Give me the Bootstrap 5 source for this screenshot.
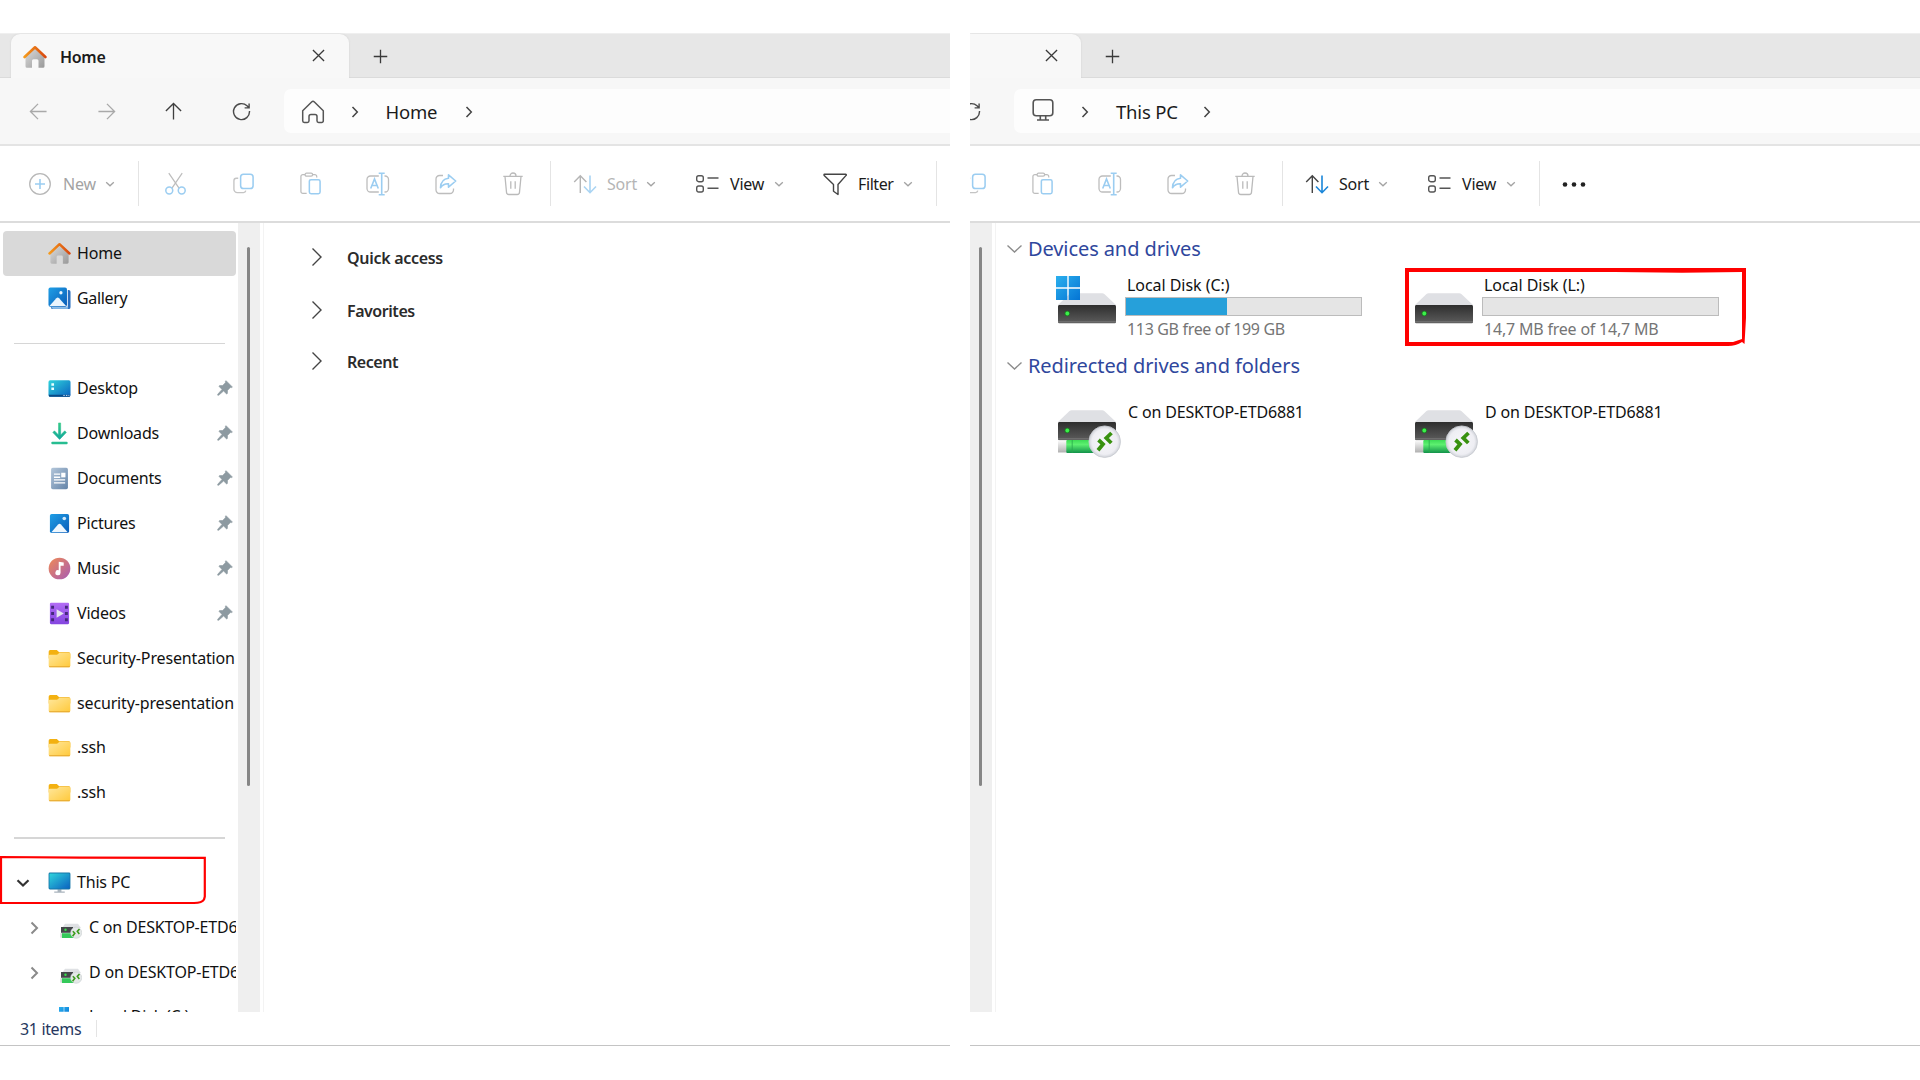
<!DOCTYPE html>
<html lang="en">
<head>
<meta charset="utf-8">
<meta name="viewport" content="width=device-width, initial-scale=1">
<title>File Explorer</title>
<link href="https://cdn.jsdelivr.net/npm/bootstrap@5.3.0/dist/css/bootstrap.min.css" rel="stylesheet">
<style>
body{font-family:"Noto Sans","Open Sans",sans-serif;font-size:16px;line-height:22px;letter-spacing:-.2px;color:#1b1b1b;background:#fff;height:1080px;overflow:hidden}
svg{display:block;flex:none}
.desk{padding-top:33px;gap:20px}
.win{width:950px;height:1013px;overflow:hidden;border-bottom:1px solid #c4c4c4}
.win>*{flex:none}

/* tab strip */
.tabbar{height:45px;background:#e7e7e7;border-top:1px solid #efefef;border-bottom:1px solid #dbdbdb;padding-left:11px}
.tab-on{width:338px;height:45px;margin-bottom:-1px;background:#f8f8f8;border-radius:9px 9px 0 0;padding-left:12px;box-shadow:0 0 2px #cfcfcf}
.tab-title{font-weight:600;letter-spacing:-.3px;margin-left:13px;width:248px}
.tab-x{margin:-2px 0 0 4px}
.tab-add{margin:2px 0 0 24px}
.tab-part{width:111px;border-radius:0 9px 0 0;padding-left:71px}

/* navigation row */
.navrow{height:68px;background:#f7f7f7;border-bottom:2px solid #e4e4e4}
.nav-arrows{gap:48.5px;padding-left:29px}
.arrow-off{color:#a9a9a9}
.arrow-fwd{transform:scaleX(-1)}
.arrow-up{transform:rotate(90deg);color:#3f3f3f}
.reload-cut{margin-left:-8px}
.addr{height:44px;background:#fdfdfd;border-radius:7px 0 0 7px;font-size:18.5px;margin-left:33px;padding:1px 0 0 17px}
.crumb{margin:1px 20px 0 25px;min-width:57px}
.crumb-pc{min-width:65px}
.crumb-sep{margin-left:24px}
.addr .crumb+.crumb-sep{margin-left:0}
.pc-line{margin-top:-4px}

/* command bar */
.tools{height:77px;border-bottom:2px solid #dcdcdc;--soft:#a9d4f3}
.cell{width:67.5px}
.cells-cut{margin-left:-28.500px}
.vr-line{width:1px;height:45px;background:#e4e4e4}
.line-a{margin:0 3px 0 22px}
.line-b{margin:0 22px 0 3px}
.line-c{margin-left:22px}
.tool span{margin:1px 5px 0 12px;width:38px}
.tool-new{padding-left:28px}
.tool-new span{margin-left:11px;width:36px}
.tool-sort{color:#444;--down:#1a86d9}
.tool-sort span{margin:1px 4px 0 10px;width:34px;color:#1b1b1b}
.tool-dim{color:#b5b5b5;--down:#a9d4f3}
.tool-view{margin-left:38px}
.tool-view span{margin-left:11px}
.tool-filter{margin-left:38px}
.tool-filter span{margin-left:11px;width:39px;letter-spacing:-.4px}
.tool-dim span{color:#a3a3a3}
.dots{margin-left:22px}

/* navigation pane */
.bodyrow{height:789px;overflow:hidden}
.side{width:238px;padding-top:8.2px;overflow:hidden;color:#111}
.item{height:44.95px;flex:none;padding-left:48px;white-space:nowrap;width:236px;overflow:hidden}
.item .lbl{margin:-1px 0 0 6px;flex:1}
.item .lbl-long{letter-spacing:-.15px}
.item .lbl-tight{letter-spacing:-.35px}
.item .pin{margin-right:3px}
.item-on{background:#d9d9d9;border-radius:4px;width:233px;margin-left:3px;padding-left:45px}
.item-root{padding-left:15px}
.item-sub{padding-left:28px}
.item-root .twist{margin-right:17px}
.item-sub .twist{margin-right:20px}
.item-sub .mini{margin-top:6px}
.item-sub .logo-mini{margin:-12px 13px 0 31px}
.item-sub .lbl{margin-left:7px}
.item-sub .lbl-up{margin-top:-3px}
.rule{height:44.95px;flex:none;width:211px;margin-left:14px}
.rule i{display:block;height:1.5px;width:100%;background:#d6d6d6}
.track{width:22px;background:#efefef;padding-top:24px}
.thumb{width:3px;height:539px;border-radius:2px;background:#868686;margin-left:9px}
.edge{width:1px;background:#f3f3f3;margin-left:3px}

/* home view */
.home-view{padding:8px 0 0 47px}
.sec{font-weight:600;letter-spacing:-.45px;height:53px;color:#2b2b2b}
.sec:last-child{height:49px}
.sec svg{margin-top:-2px}
.sec span{margin-left:24px}
.sec .wide{letter-spacing:-.3px}
.statusbar{height:33px;padding-left:20px;color:#26375e;letter-spacing:-.35px}
.statusbar .vr-line{height:17px;margin-left:15px}

/* drives view */
.pc-view{padding:12px 0 0 10px}
.head{font-size:20px;line-height:28px;letter-spacing:-.09px;color:#2f479d}
.head span{margin-left:5px}
.head-b{margin-top:3px}
.drives{padding-left:51px;margin-top:10px;height:76px}
.drives-b{margin-top:20px}
.drv{width:357px;flex:none}
.drv-icon{margin-top:19px}
.net-icon{margin:9px 3px 0 0}
.drv-text{width:237px;margin-left:8px}
.drv-name{padding:.5px 0 0 2px;line-height:22px;color:#111;letter-spacing:-.17px}
.drv-text .drv-name{letter-spacing:-.05px}
.meter{height:19px;margin:1.500px 0;border:1.5px solid #bcbcbc;border-radius:0;background:#e5e5e5}
.meter .progress-bar{background:#26a0da}
.drv-free{padding-left:2px;color:#757575;letter-spacing:-.33px}
.drv-free-b{letter-spacing:-.2px}

/* marks and badges lying over content */
.ring{position:absolute;pointer-events:none}
.ring-side{left:0;top:-5px}
.ring-drive{left:-9px;top:-5px}
.os-badge{left:-1px;top:3px}
</style>
</head>
<body>
<svg width="0" height="0" class="position-absolute" aria-hidden="true">
<defs>
<linearGradient id="gOr" x1="0" x2="1"><stop offset="0" stop-color="#f59a1c"/><stop offset="1" stop-color="#d9480f"/></linearGradient>
<linearGradient id="gGy" x1="0" y1="0" x2="1" y2="1"><stop offset="0" stop-color="#dcdcdc"/><stop offset="1" stop-color="#999"/></linearGradient>
<linearGradient id="gBl" x1="0" y1="0" x2="1" y2="1"><stop offset="0" stop-color="#1f9fe6"/><stop offset="1" stop-color="#0a5cb8"/></linearGradient>
<linearGradient id="gCy" x1="0" y1="0" x2="1" y2="1"><stop offset="0" stop-color="#2fd4dc"/><stop offset="1" stop-color="#0b62c0"/></linearGradient>
<linearGradient id="gGn" x1="0" y1="0" x2="0" y2="1"><stop offset="0" stop-color="#35c987"/><stop offset="1" stop-color="#12a99c"/></linearGradient>
<linearGradient id="gDoc" x1="0" y1="0" x2="1" y2="1"><stop offset="0" stop-color="#b3c6da"/><stop offset="1" stop-color="#6484a8"/></linearGradient>
<linearGradient id="gMu" x1="0" y1="0" x2="1" y2="1"><stop offset="0" stop-color="#f08a55"/><stop offset="1" stop-color="#a75cb4"/></linearGradient>
<linearGradient id="gVi" x1="0" y1="0" x2="0" y2="1"><stop offset="0" stop-color="#b26df5"/><stop offset="1" stop-color="#8445e0"/></linearGradient>
<linearGradient id="gFo" x1="0" y1="0" x2="1" y2="1"><stop offset="0" stop-color="#ffe79c"/><stop offset="1" stop-color="#ffc93a"/></linearGradient>
<linearGradient id="gDk" x1="0" y1="0" x2="0" y2="1"><stop offset="0" stop-color="#2e2e2e"/><stop offset="1" stop-color="#5c5c5c"/></linearGradient>
<linearGradient id="gPipe" x1="0" y1="0" x2="0" y2="1"><stop offset="0" stop-color="#3ddc55"/><stop offset=".35" stop-color="#5df070"/><stop offset="1" stop-color="#12924a"/></linearGradient>
<linearGradient id="gCap" x1="0" y1="0" x2="0" y2="1"><stop offset="0" stop-color="#fafafa"/><stop offset="1" stop-color="#b0b0b0"/></linearGradient>
<linearGradient id="gWin" x1="0" y1="0" x2="1" y2="1"><stop offset="0" stop-color="#2bb0ee"/><stop offset="1" stop-color="#0474d4"/></linearGradient>
<radialGradient id="gBadge"><stop offset="0" stop-color="#f7f7fa"/><stop offset=".8" stop-color="#eeeef3"/><stop offset="1" stop-color="#cfd2d8"/></radialGradient>

<symbol id="house" viewBox="0 0 24 24"><path d="M2.500 11 12 3l9.500 8v10.200a1.500 1.500 0 0 1-1.500 1.500h-4.500v-7a1.500 1.500 0 0 0-1.500-1.500h-3.500a1.500 1.500 0 0 0-1.500 1.500v7H4a1.500 1.500 0 0 1-1.500-1.500z" fill="url(#gGy)"/><path d="M1.600 12 12 2.300 22.400 12" fill="none" stroke="url(#gOr)" stroke-width="2.600" stroke-linejoin="round" stroke-linecap="round"/></symbol>
<symbol id="gallery" viewBox="0 0 24 24"><path d="M3 20h17V3h1.500A2 2 0 0 1 23.500 5v16a2 2 0 0 1-2 2H5a2 2 0 0 1-2-2z" fill="#2a6fc0"/><path d="M3.500 20.500h17.500V22a1 1 0 0 1-1 1H5z" fill="#7fb4e4"/><path d="M20.200 2.500v18H3" fill="none" stroke="#fff" stroke-width=".9"/><rect x=".5" y=".5" width="19.300" height="20" rx="2" fill="url(#gBl)"/><path d="m1.500 19.800 7.200-8a2 2 0 0 1 2.900 0l7.300 8z" fill="#e9f4fd"/><circle cx="13.500" cy="6" r="1.700" fill="#e9f4fd"/></symbol>
<symbol id="pictures" viewBox="0 0 24 24"><rect x="2" y="2" width="20" height="20" rx="1.800" fill="url(#gBl)"/><path d="m3.500 21 7-8a2 2 0 0 1 3 0l7 8z" fill="#eef7fe"/><circle cx="17" cy="6.800" r="1.900" fill="#cfe8fa"/></symbol>
<symbol id="desktop" viewBox="0 0 24 24"><rect x=".5" y="3.500" width="23" height="17" rx="1.800" fill="url(#gCy)"/><path d="M.7 18.500h22.600l-.6 2H1.300z" fill="#0b4a86"/><path d="M3.500 6.500h2.800v2.500H3.500zM3.500 11h2.800v2.500H3.500z" fill="#eaffff"/><path d="M16 19.200h1.500M18.700 19.200h1.500M21.300 19.200h1" stroke="#cfe8ff" stroke-width="1"/></symbol>
<symbol id="downloads" viewBox="0 0 24 24"><path d="M11 1h2.200v12.500l4.300-4.300 1.600 1.700-7 7.300-7-7.300 1.600-1.700 4.300 4.300z" fill="url(#gGn)" stroke="url(#gGn)" stroke-width=".6"/><rect x="3.500" y="20.500" width="17" height="2.700" rx="1" fill="#27bd91"/></symbol>
<symbol id="documents" viewBox="0 0 24 24"><rect x="3.200" y=".8" width="17.600" height="22.400" rx="1.800" fill="url(#gDoc)"/><path d="M6.200 7.500h6.500M6.200 10.700h6.500M6.200 13.500h11.700M6.200 16.500h11.700" stroke="#fff" stroke-width="1.400"/><rect x="13.800" y="6" width="4.400" height="4.800" fill="#fff"/></symbol>
<symbol id="music" viewBox="0 0 24 24"><circle cx="12" cy="12" r="11.300" fill="url(#gMu)"/><path d="M11.200 5v8.800a2.700 2.700 0 1 0 1.900 2.600V9h3.300V5.800z" fill="#fff"/></symbol>
<symbol id="videos" viewBox="0 0 24 24"><rect x="2" y=".8" width="20" height="22.400" rx="1.200" fill="url(#gVi)"/><path d="M3.300 4h3v3h-3zM3.300 10.500h3v3h-3zM3.300 17h3v3h-3zM17.700 4h3v3h-3zM17.700 10.500h3v3h-3zM17.700 17h3v3h-3z" fill="#45287c"/><path d="M9 7.500v9l7.500-4.500z" fill="#e6e6ee"/></symbol>
<symbol id="folder" viewBox="0 0 24 24"><path d="M.7 5A1.700 1.700 0 0 1 2.400 3.200h6.800l2.500 2.300H22A1.500 1.500 0 0 1 23.300 7v5H.7z" fill="#f3b111"/><path d="M.7 9.500a1.500 1.500 0 0 1 1.500-1.500h7.300l2.200-1.700H22a1.300 1.300 0 0 1 1.300 1.300v12a1.500 1.500 0 0 1-1.500 1.500H2.200A1.500 1.500 0 0 1 .7 19.600z" fill="url(#gFo)"/><path d="M1.200 20.600h21.600" stroke="#e3a52c" stroke-width="1"/></symbol>
<symbol id="pc" viewBox="0 0 24 24"><path d="M10 19h4v2.500h3.500v1.200h-11v-1.200H10z" fill="#a9b4bd"/><rect x=".6" y="1.600" width="22.800" height="17.600" rx="1.500" fill="#1677a8"/><rect x="1.500" y="2.500" width="21" height="15.800" rx=".7" fill="url(#gCy)"/></symbol>
<symbol id="pin" viewBox="0 0 16 16"><path d="m9.300.9 5.800 5.800c.3.500 0 .9-.5.900h-1.300L10.500 10.400l-.1 2.900c-.1.700-.7.800-1.100.4L6.600 11 1.700 15.300.7 15.200.7 14.300 5 9.400 2.300 6.700c-.4-.4-.3-1 .4-1.100l2.900-.1L8.400 2.700V1.400C8.400.900 8.900.500 9.300.9z" fill="#8d9aa1" stroke="#8d9aa1" stroke-width=".6"/></symbol>
<symbol id="disk" viewBox="0 0 60 32"><path d="M14.500 1.300h30.800a3 3 0 0 1 2 .8L59 13H1L12.500 2.100a3 3 0 0 1 2-.8z" fill="#dfe0e4"/><path d="M1 14.500 1.600 13h56.800l.6 1.500V30a1.200 1.200 0 0 1-1.200 1.200H2.200A1.200 1.200 0 0 1 1 30z" fill="url(#gDk)"/><path d="M1 29.800h58" stroke="#777" stroke-width="1"/><circle cx="10.300" cy="21.500" r="2.700" fill="#1c7a22"/><circle cx="10.300" cy="21.500" r="1.900" fill="#3cf04b"/></symbol>
<symbol id="netdisk" viewBox="0 0 66 50"><use href="#disk" width="60" height="32"/><rect x="1" y="31.500" width="9" height="12" fill="url(#gCap)"/><rect x="9.300" y="31" width="35" height="13" rx="1" fill="url(#gPipe)"/><path d="M15.200 31v13" stroke="#29a84c" stroke-width=".8"/><circle cx="47.700" cy="32.700" r="15.800" fill="url(#gBadge)" stroke="#c6c9cf" stroke-width=".8"/><path d="m41.500 31 4.500 4.200-5 6M54.500 24l-5.200 5 5 5" fill="none" stroke="#38910f" stroke-width="3.800"/></symbol>
<symbol id="netmini" viewBox="0 0 22 16"><path d="M5 .8h13l3 4.200H2z" fill="#dfe1e4"/><path d="M1 4h12v5.800H1z" fill="#44474a"/><circle cx="5.500" cy="6.800" r="1.200" fill="#36e04a"/><path d="M.3 10.200h3v4.500h-3z" fill="#d5dad5"/><path d="M2 10.200h12v4.800H2z" fill="#35c95a"/><circle cx="16.200" cy="9.700" r="5.600" fill="#e4e8e8" stroke="#c3c8ca" stroke-width=".5"/><path d="m12.800 8.300 2 2-2.200 3M19.500 6l-2.200 2.400 2 2.600" fill="none" stroke="#3d9b1c" stroke-width="1.600"/></symbol>
<symbol id="winlogo" viewBox="0 0 24 24"><path d="M0 0h11.300v11.300H0zM12.700 0H24v11.300H12.700zM0 12.700h11.300V24H0zM12.700 12.700H24V24H12.700z" fill="url(#gWin)"/></symbol>

<symbol id="chev" viewBox="0 0 12 12"><path d="m2.200 4.200 3.800 3.600 3.800-3.600" fill="none" stroke="#a3a3a3" stroke-width="1.300"/></symbol>
<symbol id="chevR" viewBox="0 0 12 14"><path d="m3.500 2 4.800 5-4.800 5" fill="none" stroke="#444" stroke-width="1.500"/></symbol>
<symbol id="chevSec" viewBox="0 0 12 20"><path d="m1.500 1.500 8.500 8.500-8.500 8.500" fill="none" stroke="#444" stroke-width="1.400"/></symbol>
<symbol id="chevHead" viewBox="0 0 17 12"><path d="m1.500 2.500 7 6.500 7-6.500" fill="none" stroke="#8c8c8c" stroke-width="1.400"/></symbol>
<symbol id="twistR" viewBox="0 0 12 14"><path d="m3.500 1.500 5.500 5.500-5.500 5.500" fill="none" stroke="#8a8a8a" stroke-width="2"/></symbol>
<symbol id="twistD" viewBox="0 0 16 14"><path d="m2.500 4.200 5.500 5.300 5.500-5.300" fill="none" stroke="#333" stroke-width="2.200"/></symbol>
<symbol id="cut" viewBox="0 0 24 24" fill="none" stroke-width="1.300"><path d="M5 1.200 15.500 16.500M19 1.200 8.500 16.500" stroke="#bdbdbd"/><circle cx="5.500" cy="19.300" r="3.600" stroke="#9bcdf1" stroke-width="1.600"/><circle cx="18.500" cy="19.300" r="3.600" stroke="#9bcdf1" stroke-width="1.600"/></symbol>
<symbol id="copy" viewBox="0 0 24 24" fill="none" stroke-width="1.400"><path d="M6.500 6.500H4.500A2.500 2.500 0 0 0 2 9v9a3.500 3.500 0 0 0 3.500 3.500H12a2.500 2.500 0 0 0 2.400-2" stroke="#c4c4c4"/><rect x="9" y="2.300" width="13" height="15" rx="3" stroke="#9bcdf1" stroke-width="1.600"/></symbol>
<symbol id="paste" viewBox="0 0 24 24" fill="none" stroke-width="1.300"><path d="M8 22.300H4A2 2 0 0 1 2 20.300V4.700a2 2 0 0 1 2-2h2.500M14 2.700h2.500a2 2 0 0 1 2 2v1" stroke="#bdbdbd"/><rect x="6.300" y="1.300" width="7.900" height="3" rx="1.500" stroke="#bdbdbd"/><rect x="10.800" y="8" width="11.200" height="14.700" rx="1.800" stroke="#9bcdf1" stroke-width="1.600"/></symbol>
<symbol id="rename" viewBox="0 0 24 24" fill="none" stroke-width="1.300"><path d="M12.800 20H4.500A3.500 3.500 0 0 1 1 16.500v-9A3.500 3.500 0 0 1 4.500 4h8.300M18.500 4h.5A3.500 3.500 0 0 1 22.500 7.500v9A3.500 3.500 0 0 1 19 20h-.5" stroke="#bdbdbd"/><path d="m4.700 16.500 3.800-9.500 3.800 9.500M6 13.500h5M12.700 1.200h6M12.700 22.800h6M15.700 1.200v21.600" stroke="#9bcdf1" stroke-width="1.600"/></symbol>
<symbol id="share" viewBox="0 0 24 24" fill="none" stroke-width="1.300"><path d="M9 3.500H5.500A3.500 3.500 0 0 0 2 7v11a3.500 3.500 0 0 0 3.500 3.500H16a3.500 3.500 0 0 0 3.500-3.500v-1.500" stroke="#bdbdbd"/><path d="M14.500 6.300V2.800l7.200 6.200-7.200 6.200v-3.500c-3.500-.2-6 1-8 4C6.800 10 9.500 6.800 14.500 6.300z" stroke="#9bcdf1" stroke-width="1.600" stroke-linejoin="round"/></symbol>
<symbol id="trash" viewBox="0 0 24 24" fill="none" stroke="#bababa" stroke-width="1.300"><path d="M2.300 4.300h19.400M9 4a3 3 0 0 1 6 0M4 4.500l1.500 15.800a2.300 2.300 0 0 0 2.300 2.200h8.400a2.300 2.300 0 0 0 2.300-2.200L20 4.500M9.800 9.300v7.500M14.200 9.300v7.500"/></symbol>
<symbol id="sort" viewBox="0 0 24 24" fill="none" stroke-width="1.400"><path d="M7.300 21V4M1.200 10l6.100-6.200L13.400 10" stroke="currentColor"/><path d="M17 3.500v17M11 14.500l6 6.200 6-6.200" stroke="var(--down)" stroke-width="1.600"/></symbol>
<symbol id="view" viewBox="0 0 24 24" fill="none" stroke="#555" stroke-width="1.400"><rect x="1.700" y="3.700" width="6.600" height="6" rx="2"/><rect x="1.700" y="14" width="6.600" height="6" rx="2"/><path d="M12.500 6h11M12.500 16.300h11"/></symbol>
<symbol id="filter" viewBox="0 0 24 24" fill="none" stroke="#444" stroke-width="1.400"><path d="M1.500 2.200h21a.7.700 0 0 1 .6 1.200L15 12.500v10l-4.500-3.200v-6.800L1.200 3.400a.7.700 0 0 1 .3-1.200z" stroke-linejoin="round"/></symbol>
<symbol id="newi" viewBox="0 0 24 24" fill="none" stroke-width="1.300"><circle cx="12" cy="12" r="10.300" stroke="#b8b8b8"/><path d="M12 7v10M7 12h10" stroke="#9bcdf1" stroke-width="1.600"/></symbol>
<symbol id="arrow" viewBox="0 0 20 20" fill="none" stroke="currentColor" stroke-width="1.400"><path d="M18.500 10h-17M9.500 2 1.500 10l8 8"/></symbol>
<symbol id="reload" viewBox="0 0 20 20" fill="none" stroke="#4a4a4a" stroke-width="1.500"><path d="M18.400 9.500A8.400 8.400 0 1 1 15.800 4L17.600 5.800M18 1.500v4.700h-4.700"/></symbol>
<symbol id="homeline" viewBox="0 0 24 24" fill="none" stroke="#555" stroke-width="1.500"><path d="M1.700 10.800 10.600 2a2 2 0 0 1 2.800 0l8.900 8.800v10a1.600 1.600 0 0 1-1.600 1.600h-3.100a1.600 1.600 0 0 1-1.600-1.600v-4.300A2 2 0 0 0 14 14.500h-4A2 2 0 0 0 8 16.500v4.300a1.600 1.600 0 0 1-1.600 1.600H3.300a1.600 1.600 0 0 1-1.600-1.600z" stroke-linejoin="round"/></symbol>
<symbol id="pcline" viewBox="0 0 24 24" fill="none" stroke="#555" stroke-width="1.600"><rect x="2.200" y="1.800" width="19.600" height="16" rx="3"/><path d="M9.300 18v4M14.700 18v4M6 22h12"/></symbol>
<symbol id="close" viewBox="0 0 14 14"><path d="m1 1 12 12M13 1 1 13" stroke="#3a3a3a" stroke-width="1.400"/></symbol>
<symbol id="plus" viewBox="0 0 16 16"><path d="M8 .8v14.400M.8 8h14.400" stroke="#3a3a3a" stroke-width="1.400"/></symbol>
</defs>
</svg>

<div class="desk d-flex">
  <section class="win d-flex flex-column">
    <div class="tabbar d-flex">
      <div class="tab-on d-flex align-items-center"><svg width="24" height="24"><use href="#house"/></svg><span class="tab-title">Home</span><svg class="tab-x" width="13" height="13"><use href="#close"/></svg></div>
      <svg class="tab-add align-self-center" width="15" height="15"><use href="#plus"/></svg>
    </div>
    <div class="navrow d-flex align-items-center">
      <div class="nav-arrows d-flex">
        <svg class="arrow-off" width="19" height="19"><use href="#arrow"/></svg>
        <svg class="arrow-off arrow-fwd" width="19" height="19"><use href="#arrow"/></svg>
        <svg class="arrow-up" width="19" height="19"><use href="#arrow"/></svg>
        <svg width="19" height="19"><use href="#reload"/></svg>
      </div>
      <div class="addr d-flex align-items-center flex-grow-1">
        <svg width="24" height="24"><use href="#homeline"/></svg>
        <svg class="crumb-sep" width="12" height="14"><use href="#chevR"/></svg>
        <span class="crumb">Home</span>
        <svg class="crumb-sep" width="12" height="14"><use href="#chevR"/></svg>
      </div>
    </div>
    <div class="tools d-flex align-items-center">
      <div class="tool tool-new tool-dim d-flex align-items-center"><svg width="24" height="24"><use href="#newi"/></svg><span>New</span><svg width="12" height="12"><use href="#chev"/></svg></div>
      <div class="vr-line line-a"></div>
      <div class="cell d-flex justify-content-center"><svg width="23" height="23"><use href="#cut"/></svg></div>
      <div class="cell d-flex justify-content-center"><svg width="23" height="23"><use href="#copy"/></svg></div>
      <div class="cell d-flex justify-content-center"><svg width="23" height="23"><use href="#paste"/></svg></div>
      <div class="cell d-flex justify-content-center"><svg width="24" height="24"><use href="#rename"/></svg></div>
      <div class="cell d-flex justify-content-center"><svg width="24" height="24"><use href="#share"/></svg></div>
      <div class="cell d-flex justify-content-center"><svg width="24" height="24"><use href="#trash"/></svg></div>
      <div class="vr-line line-b"></div>
      <div class="tool tool-sort tool-dim d-flex align-items-center"><svg width="24" height="24"><use href="#sort"/></svg><span class="text-reset">Sort</span><svg width="12" height="12"><use href="#chev"/></svg></div>
      <div class="tool tool-view d-flex align-items-center"><svg width="24" height="24"><use href="#view"/></svg><span>View</span><svg width="12" height="12"><use href="#chev"/></svg></div>
      <div class="tool tool-filter d-flex align-items-center"><svg width="24" height="24"><use href="#filter"/></svg><span>Filter</span><svg width="12" height="12"><use href="#chev"/></svg></div>
      <div class="vr-line line-c"></div>
    </div>
    <div class="bodyrow d-flex">
      <nav class="side d-flex flex-column">
        <div class="item item-on d-flex align-items-center"><svg width="23" height="23"><use href="#house"/></svg><span class="lbl">Home</span></div>
        <div class="item d-flex align-items-center"><svg width="23" height="23"><use href="#gallery"/></svg><span class="lbl lbl-tight">Gallery</span></div>
        <div class="rule d-flex align-items-center"><i></i></div>
        <div class="item d-flex align-items-center"><svg width="23" height="23"><use href="#desktop"/></svg><span class="lbl">Desktop</span><svg class="pin" width="16" height="16"><use href="#pin"/></svg></div>
        <div class="item d-flex align-items-center"><svg width="23" height="23"><use href="#downloads"/></svg><span class="lbl">Downloads</span><svg class="pin" width="16" height="16"><use href="#pin"/></svg></div>
        <div class="item d-flex align-items-center"><svg width="23" height="23"><use href="#documents"/></svg><span class="lbl">Documents</span><svg class="pin" width="16" height="16"><use href="#pin"/></svg></div>
        <div class="item d-flex align-items-center"><svg width="23" height="23"><use href="#pictures"/></svg><span class="lbl">Pictures</span><svg class="pin" width="16" height="16"><use href="#pin"/></svg></div>
        <div class="item d-flex align-items-center"><svg width="23" height="23"><use href="#music"/></svg><span class="lbl">Music</span><svg class="pin" width="16" height="16"><use href="#pin"/></svg></div>
        <div class="item d-flex align-items-center"><svg width="23" height="23"><use href="#videos"/></svg><span class="lbl">Videos</span><svg class="pin" width="16" height="16"><use href="#pin"/></svg></div>
        <div class="item d-flex align-items-center"><svg width="23" height="23"><use href="#folder"/></svg><span class="lbl lbl-long">Security-Presentation</span></div>
        <div class="item d-flex align-items-center"><svg width="23" height="23"><use href="#folder"/></svg><span class="lbl lbl-long">security-presentation</span></div>
        <div class="item d-flex align-items-center"><svg width="23" height="23"><use href="#folder"/></svg><span class="lbl">.ssh</span></div>
        <div class="item d-flex align-items-center"><svg width="23" height="23"><use href="#folder"/></svg><span class="lbl">.ssh</span></div>
        <div class="rule d-flex align-items-center"><i></i></div>
        <div class="position-relative">
          <div class="item item-root d-flex align-items-center"><svg class="twist" width="16" height="14"><use href="#twistD"/></svg><svg width="23" height="23"><use href="#pc"/></svg><span class="lbl">This PC</span></div>
          <svg class="ring ring-side" width="207" height="50" viewBox="0 0 207 50"><path d="M1 2v46h193q8 0 10-3.500l.8-3V2.800L80 2.600 0 2" fill="none" stroke="#f00" stroke-width="2.200"/></svg>
        </div>
        <div class="item item-sub d-flex align-items-center"><svg class="twist" width="12" height="14"><use href="#twistR"/></svg><svg class="mini" width="22" height="16"><use href="#netmini"/></svg><span class="lbl">C on DESKTOP-ETD6881</span></div>
        <div class="item item-sub d-flex align-items-center"><svg class="twist" width="12" height="14"><use href="#twistR"/></svg><svg class="mini" width="22" height="16"><use href="#netmini"/></svg><span class="lbl">D on DESKTOP-ETD6881</span></div>
        <div class="item item-sub d-flex align-items-center"><svg class="logo-mini" width="10" height="10"><use href="#winlogo"/></svg><span class="lbl lbl-up">Local Disk (C:)</span></div>
      </nav>
      <div class="track"><div class="thumb"></div></div>
      <div class="edge"></div>
      <main class="home-view">
        <div class="sec d-flex align-items-center"><svg width="12" height="20"><use href="#chevSec"/></svg><span class="wide">Quick access</span></div>
        <div class="sec d-flex align-items-center"><svg width="12" height="20"><use href="#chevSec"/></svg><span>Favorites</span></div>
        <div class="sec d-flex align-items-center"><svg width="12" height="20"><use href="#chevSec"/></svg><span>Recent</span></div>
      </main>
    </div>
    <footer class="statusbar d-flex align-items-center"><span>31 items</span><div class="vr-line"></div></footer>
  </section>

  <section class="win d-flex flex-column">
    <div class="tabbar d-flex ps-0">
      <div class="tab-on tab-part d-flex align-items-center"><svg class="tab-x" width="13" height="13"><use href="#close"/></svg></div>
      <svg class="tab-add align-self-center" width="15" height="15"><use href="#plus"/></svg>
    </div>
    <div class="navrow d-flex align-items-center">
      <svg class="reload-cut" width="19" height="19"><use href="#reload"/></svg>
      <div class="addr d-flex align-items-center flex-grow-1">
        <svg class="pc-line" width="24" height="24"><use href="#pcline"/></svg>
        <svg class="crumb-sep" width="12" height="14"><use href="#chevR"/></svg>
        <span class="crumb crumb-pc">This PC</span>
        <svg class="crumb-sep" width="12" height="14"><use href="#chevR"/></svg>
      </div>
    </div>
    <div class="tools d-flex align-items-center">
      <div class="cell cells-cut d-flex justify-content-center"><svg width="23" height="23"><use href="#copy"/></svg></div>
      <div class="cell d-flex justify-content-center"><svg width="23" height="23"><use href="#paste"/></svg></div>
      <div class="cell d-flex justify-content-center"><svg width="24" height="24"><use href="#rename"/></svg></div>
      <div class="cell d-flex justify-content-center"><svg width="24" height="24"><use href="#share"/></svg></div>
      <div class="cell d-flex justify-content-center"><svg width="24" height="24"><use href="#trash"/></svg></div>
      <div class="vr-line line-b"></div>
      <div class="tool tool-sort d-flex align-items-center"><svg width="24" height="24"><use href="#sort"/></svg><span>Sort</span><svg width="12" height="12"><use href="#chev"/></svg></div>
      <div class="tool tool-view d-flex align-items-center"><svg width="24" height="24"><use href="#view"/></svg><span>View</span><svg width="12" height="12"><use href="#chev"/></svg></div>
      <div class="vr-line line-c"></div>
      <svg class="dots" width="24" height="6" viewBox="0 0 24 6"><g fill="#222"><circle cx="3" cy="3.500" r="2.300"/><circle cx="12" cy="3.500" r="2.300"/><circle cx="21" cy="3.500" r="2.300"/></g></svg>
    </div>
    <div class="bodyrow d-flex">
      <div class="track"><div class="thumb"></div></div>
      <div class="edge"></div>
      <main class="pc-view">
        <div class="head d-flex align-items-center"><svg width="17" height="12"><use href="#chevHead"/></svg><span>Devices and drives</span></div>
        <div class="drives d-flex">
          <div class="drv d-flex">
            <div class="position-relative"><svg class="drv-icon" width="60" height="32"><use href="#disk"/></svg><svg class="ring os-badge" width="24" height="24"><use href="#winlogo"/></svg></div>
            <div class="drv-text"><div class="drv-name">Local Disk (C:)</div><div class="progress meter"><div class="progress-bar" style="width:43%"></div></div><div class="drv-free">113 GB free of 199 GB</div></div>
          </div>
          <div class="drv d-flex position-relative">
            <svg class="drv-icon" width="60" height="32"><use href="#disk"/></svg>
            <div class="drv-text"><div class="drv-name">Local Disk (L:)</div><div class="progress meter"><div class="progress-bar" style="width:0%"></div></div><div class="drv-free drv-free-b">14,7 MB free of 14,7 MB</div></div>
            <svg class="ring ring-drive" width="342" height="78" viewBox="0 0 342 78"><path d="M0 0h341v50l-1.500 26-2.500-2q-6 4-14 4H0zM4 4v70h324l9-3V4l-60 .8L210 4z" fill="#f00" fill-rule="evenodd"/></svg>
          </div>
        </div>
        <div class="head head-b d-flex align-items-center"><svg width="17" height="12"><use href="#chevHead"/></svg><span>Redirected drives and folders</span></div>
        <div class="drives drives-b d-flex">
          <div class="drv d-flex"><svg class="net-icon" width="66" height="50"><use href="#netdisk"/></svg><div class="drv-name">C on DESKTOP-ETD6881</div></div>
          <div class="drv d-flex"><svg class="net-icon" width="66" height="50"><use href="#netdisk"/></svg><div class="drv-name">D on DESKTOP-ETD6881</div></div>
        </div>
      </main>
    </div>
  </section>
</div>
<script src="https://cdn.jsdelivr.net/npm/bootstrap@5.3.0/dist/js/bootstrap.bundle.min.js"></script>
</body>
</html>
